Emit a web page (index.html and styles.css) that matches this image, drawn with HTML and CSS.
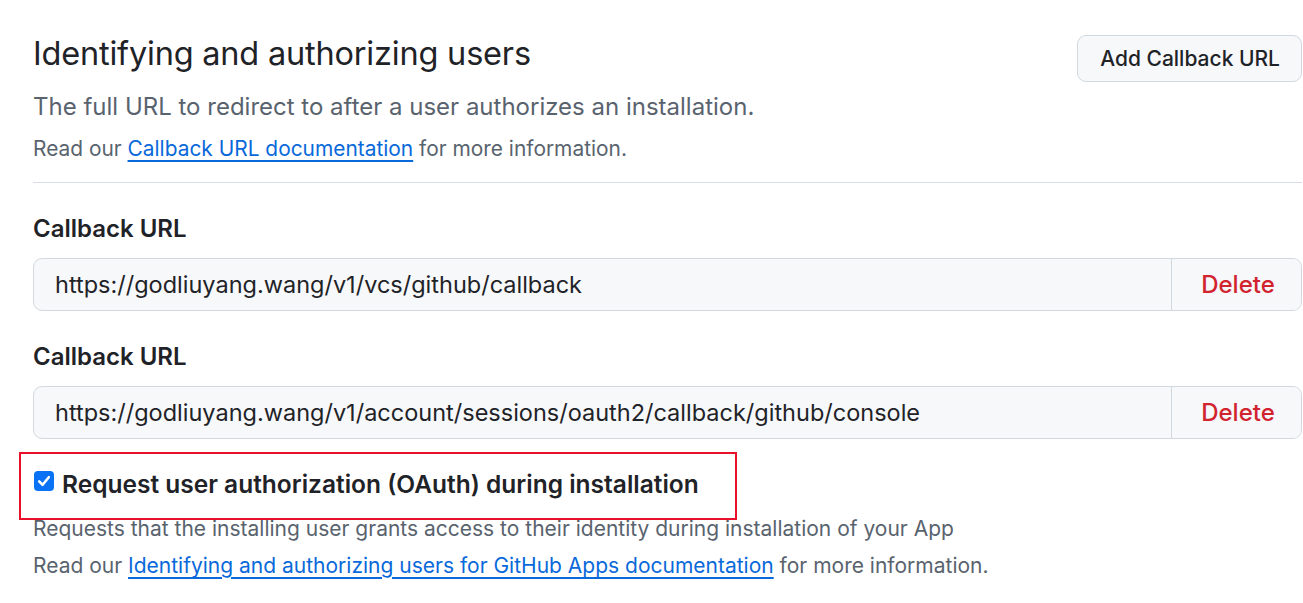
FILE: index.html
```html
<!DOCTYPE html>
<html lang="en">
<head>
<meta charset="utf-8">
<title>Identifying and authorizing users</title>
<link rel="stylesheet" href="styles.css">
</head>
<body>
<main class="page">
  <div class="subhead">
    <h2 class="subhead-heading">Identifying and authorizing users</h2>
    <button class="btn" type="button">Add Callback URL</button>
  </div>
  <p class="lead">The full URL to redirect to after a user authorizes an installation.</p>
  <p class="note note-first">Read our <a href="#" class="link">Callback URL documentation</a> for more information.</p>
  <hr class="divider">

  <div class="field">
    <label class="field-label">Callback URL</label>
    <div class="input-group">
      <input class="input" type="text" value="https://godliuyang.wang/v1/vcs/github/callback">
      <button class="input-btn" type="button">Delete</button>
    </div>
  </div>

  <div class="field field-next">
    <label class="field-label">Callback URL</label>
    <div class="input-group">
      <input class="input" type="text" value="https://godliuyang.wang/v1/account/sessions/oauth2/callback/github/console">
      <button class="input-btn" type="button">Delete</button>
    </div>
  </div>

  <div class="check-row">
    <span class="checkbox" aria-hidden="true">
      <svg viewBox="0 0 20 20" width="20" height="20"><path d="M5.2 10.4 L8.6 13.8 L14.8 6.2" fill="none" stroke="#fff" stroke-width="2.6" stroke-linecap="round" stroke-linejoin="round"/></svg>
    </span>
    <label class="check-label">Request user authorization (OAuth) during installation</label>
  </div>
  <p class="note note-check">Requests that the installing user grants access to their identity during installation of your App</p>
  <p class="note note-last">Read our <a href="#" class="link">Identifying and authorizing users for GitHub Apps documentation</a> for more information.</p>
</main>
</body>
</html>
```

FILE: styles.css
```css
* { box-sizing: border-box; }

html, body {
  margin: 0;
  padding: 0;
  background: #ffffff;
}

body {
  font-family: "Inter", "Liberation Sans", sans-serif;
  color: #1f2328;
  width: 1303px;
  height: 603px;
  overflow: hidden;
}

.page {
  padding: 33px 1px 0 33px;
}

.subhead {
  display: flex;
  justify-content: space-between;
  align-items: flex-start;
}

.subhead-heading {
  margin: 0;
  font-size: 32.5px;
  font-weight: 400;
  line-height: 42px;
  letter-spacing: -0.2px;
  color: #1f2328;
}

.btn {
  margin-top: 2px;
  height: 47px;
  padding: 0 21px 0 22px;
  font-family: inherit;
  font-size: 21px;
  font-weight: 500;
  color: #1f2328;
  background: #f6f8fa;
  border: 1px solid #d1d9e0;
  border-radius: 9px;
}

.lead {
  margin: 7px 0 0;
  font-size: 24px;
  line-height: 36px;
  color: #59636e;
}

.note {
  margin: 0;
  font-size: 21px;
  line-height: 30px;
  color: #59636e;
}

.note-first { margin-top: 9px; font-size: 20.9px; }

.link {
  color: #0969da;
  text-decoration: underline;
  text-decoration-thickness: 2px;
  text-underline-offset: 4px;
}

.divider {
  margin: 18px 0 0;
  border: 0;
  height: 1px;
  background: #d8dee4;
}

.field {
  margin-top: 28px;
  display: flex;
  flex-direction: column;
  gap: 11px;
}

.field-next { margin-top: 28px; }

.field-label {
  font-size: 24px;
  font-weight: 600;
  line-height: 36px;
  color: #1f2328;
}

.input-group {
  display: flex;
  height: 53px;
  background: #f6f8fa;
  border: 1px solid #d1d9e0;
  border-radius: 9px;
  overflow: hidden;
}

.input {
  flex: 1;
  min-width: 0;
  border: 0;
  background: transparent;
  padding: 0 21px;
  font-family: inherit;
  font-size: 23.5px;
  color: #1f2328;
  outline: none;
}

.input-btn {
  width: 130px;
  border: 0;
  border-left: 1px solid #d1d9e0;
  background: #f6f8fa;
  font-family: inherit;
  font-size: 24px;
  font-weight: 500;
  color: #d1242f;
  padding: 0 0 0 3px;
}

.check-row {
  position: relative;
  margin-top: 27px;
  display: flex;
  align-items: flex-start;
  gap: 8px;
  padding-left: 1px;
}

.check-row::after {
  content: "";
  position: absolute;
  left: -14px;
  top: -14px;
  width: 714px;
  height: 64px;
  border: 2px solid #e8102a;
  pointer-events: none;
}

.checkbox {
  margin-top: 5px;
  width: 20px;
  height: 20px;
  flex: none;
  border-radius: 4px;
  background: #0a72f5;
  display: flex;
}

.check-label {
  font-size: 24.5px;
  font-weight: 600;
  line-height: 36px;
  color: #1f2328;
}

.note-check { margin-top: 12px; }
.note-last { margin-top: 7px; }
```
